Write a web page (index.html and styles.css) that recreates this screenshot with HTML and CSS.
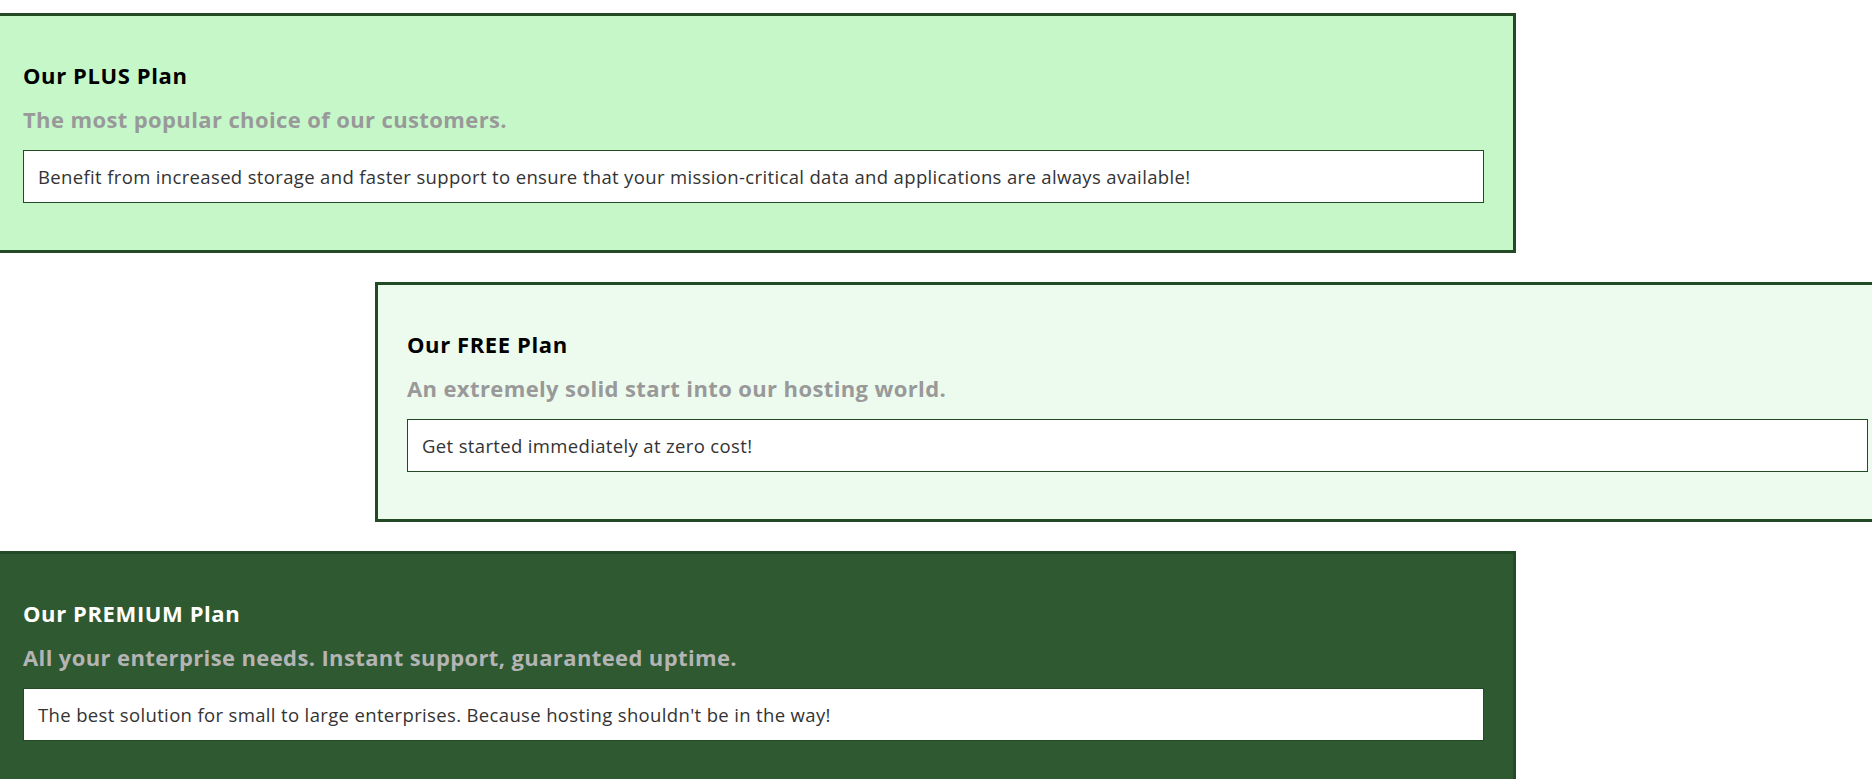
FILE: index.html
```html
<!DOCTYPE html>
<html lang="en">
<head>
<meta charset="utf-8">
<title>Plans</title>
<link rel="stylesheet" href="styles.css">
</head>
<body>
<main class="plans">
  <section class="plan plan-plus">
    <h2 class="plan-title">Our PLUS Plan</h2>
    <h3 class="plan-tagline">The most popular choice of our customers.</h3>
    <p class="plan-desc">Benefit from increased storage and faster support to ensure that your mission-critical data and applications are always available!</p>
  </section>
  <section class="plan plan-free">
    <h2 class="plan-title">Our FREE Plan</h2>
    <h3 class="plan-tagline">An extremely solid start into our hosting world.</h3>
    <p class="plan-desc">Get started immediately at zero cost!</p>
  </section>
  <section class="plan plan-premium">
    <h2 class="plan-title">Our PREMIUM Plan</h2>
    <h3 class="plan-tagline">All your enterprise needs. Instant support, guaranteed uptime.</h3>
    <p class="plan-desc">The best solution for small to large enterprises. Because hosting shouldn't be in the way!</p>
  </section>
</main>
</body>
</html>
```
FILE: styles.css
```css
* {
  box-sizing: border-box;
}

html, body {
  margin: 0;
  padding: 0;
  overflow: hidden;
  background: #ffffff;
}

body {
  font-family: "Open Sans", "Liberation Sans", sans-serif;
}

.plans {
  display: flex;
  flex-direction: column;
  gap: 29px;
  padding-top: 13px;
}

.plan {
  width: 1525px;
  margin-left: -9px;
  border: 3px solid #224a24;
  padding: 29px;
  flex-shrink: 0;
}

.plan-plus {
  background: #c6f7c9;
}

.plan-free {
  background: #ecfbed;
  margin-left: 375px;
}

.plan-premium {
  background: #2f5930;
  border-color: #244b27;
}

.plan-title {
  margin: 16.5px 0 0;
  font-size: 22px;
  line-height: 26px;
  letter-spacing: 0.6px;
  font-weight: 700;
  color: #000000;
}

.plan-premium .plan-title {
  color: #ffffff;
}

.plan-tagline {
  margin: 18px 0 0;
  font-size: 22px;
  line-height: 26px;
  letter-spacing: 0.38px;
  font-weight: 700;
  color: #999999;
}

.plan-premium .plan-tagline {
  color: #b4b4b4;
}

.plan-desc {
  margin: 18.5px 0 18px;
  background: #ffffff;
  border: 1px solid #224a24;
  padding: 13px 14px;
  font-size: 18.5px;
  line-height: 25px;
  letter-spacing: 0.35px;
  color: #333333;
}
```
